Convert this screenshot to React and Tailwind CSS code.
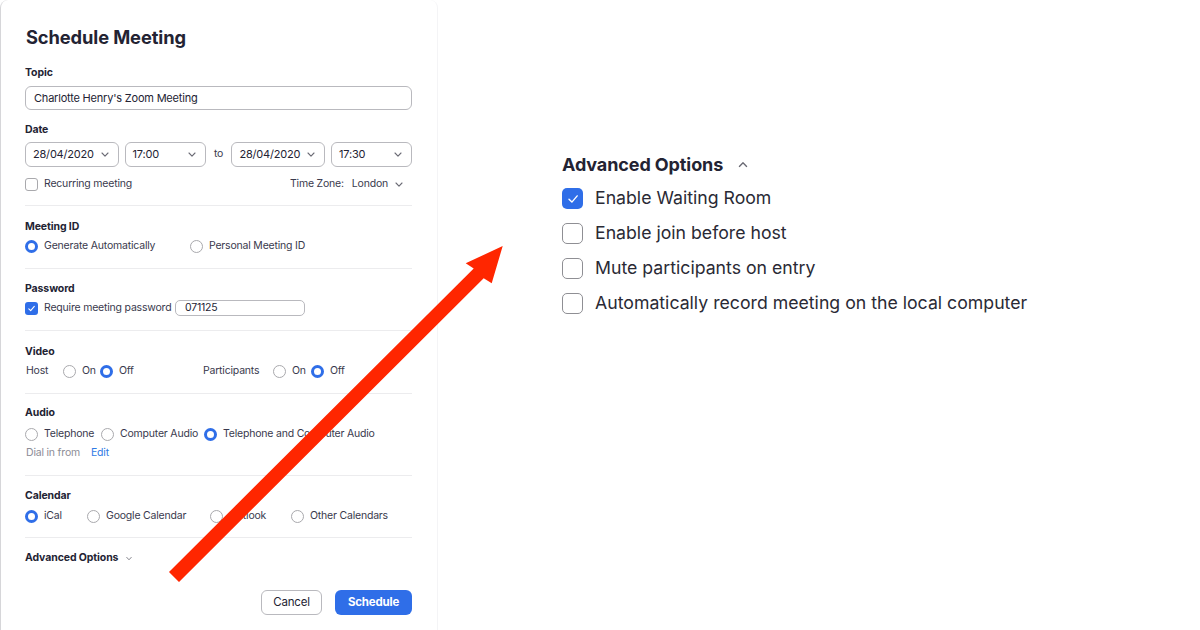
import React from "react";

const F = { fontFamily: "Inter, 'Noto Sans', sans-serif" };

function Chevron({ up = false, className = "" }) {
  return (
    <svg width="8" height="5" viewBox="0 0 8 5" className={className}>
      <path
        d={up ? "M1 4.2 L4 1 L7 4.2" : "M1 1 L4 4.2 L7 1"}
        fill="none"
        stroke="#6b6b75"
        strokeWidth="1.1"
        strokeLinecap="round"
        strokeLinejoin="round"
      />
    </svg>
  );
}

function Radio({ checked }) {
  return checked ? (
    <span className="inline-block w-[13px] h-[13px] rounded-full border-[3.5px] border-[#2f6ee8] bg-white shrink-0" />
  ) : (
    <span className="inline-block w-[13px] h-[13px] rounded-full border border-[#a9a9ad] bg-white shrink-0" />
  );
}

function SmallCheck({ checked }) {
  return checked ? (
    <span className="inline-flex items-center justify-center w-[13px] h-[13px] rounded-[3px] bg-[#2f6ee8] shrink-0">
      <svg width="9" height="9" viewBox="0 0 9 9">
        <path d="M1.8 4.8 L3.7 6.6 L7.3 2.4" fill="none" stroke="white" strokeWidth="1.1" strokeLinecap="round" strokeLinejoin="round" />
      </svg>
    </span>
  ) : (
    <span className="inline-block w-[13px] h-[13px] rounded-[3px] border border-[#a9a9ad] bg-white shrink-0" />
  );
}

function BigCheck({ checked }) {
  return checked ? (
    <span className="inline-flex items-center justify-center w-[21px] h-[21px] rounded-[5px] bg-[#2f6ee8] shrink-0">
      <svg width="14" height="14" viewBox="0 0 14 14">
        <path d="M3 7.3 L5.9 10.1 L11.2 3.9" fill="none" stroke="white" strokeWidth="1.4" strokeLinecap="round" strokeLinejoin="round" />
      </svg>
    </span>
  ) : (
    <span className="inline-block w-[21px] h-[21px] rounded-[5px] border border-[#8f8f94] bg-white shrink-0" />
  );
}

function Select({ value, w }) {
  return (
    <div
      className={`${w} h-[25px] rounded-[6px] border border-[#b9b9be] flex items-center justify-between pl-[7px] pr-[9px] text-[11px] tracking-[-0.2px] text-[#232333]`}
    >
      <span>{value}</span>
      <Chevron />
    </div>
  );
}

function Label({ children, className = "" }) {
  return <div className={`h-[14px] leading-[14px] text-[10.5px] font-bold tracking-[-0.1px] text-[#232333] ${className}`}>{children}</div>;
}

function Divider({ className = "" }) {
  return <div className={`border-t border-[#ececee] ${className}`} />;
}

export default function App() {
  return (
    <div className="relative w-[1200px] h-[630px] bg-white overflow-hidden flex whitespace-nowrap" style={F}>
      {/* Left panel */}
      <div className="w-[438px] h-[640px] shrink-0 rounded-[8px] border-x border-l-[#d6d6d9] border-r-[#f4f4f6] pl-[24px] pr-[25px] pt-[26px] flex flex-col text-[#39394d] text-[10.5px] tracking-[-0.2px]">
        <div className="h-[22px] leading-[22px] text-[18.3px] font-bold text-[#232333] tracking-[-0.1px] pl-[1px]">Schedule Meeting</div>

        <Label className="mt-[18px]">Topic</Label>
        <div className="mt-[6px] h-[24px] rounded-[6px] border border-[#b9b9be] flex items-center pl-[8px] text-[11px] text-[#232333]">
          Charlotte Henry's Zoom Meeting
        </div>

        <Label className="mt-[13px]">Date</Label>
        <div className="mt-[5px] flex items-center">
          <Select value="28/04/2020" w="w-[94px]" />
          <div className="ml-[6px]">
            <Select value="17:00" w="w-[81px]" />
          </div>
          <span className="w-[26px] text-center -mt-[2px]">to</span>
          <Select value="28/04/2020" w="w-[94px]" />
          <div className="ml-[6px]">
            <Select value="17:30" w="w-[81px]" />
          </div>
        </div>

        <div className="mt-[10px] h-[14px] flex items-center">
          <SmallCheck />
          <span className="ml-[6px]">Recurring meeting</span>
          <span className="ml-auto">Time Zone:</span>
          <span className="ml-[8px]">London</span>
          <Chevron className="ml-[7px] mr-[9px]" />
        </div>

        <Divider className="mt-[14px]" />

        <Label className="mt-[14px]">Meeting ID</Label>
        <div className="mt-[5px] h-[14px] flex items-center">
          <Radio checked />
          <span className="ml-[6px] w-[146px] shrink-0">Generate Automatically</span>
          <Radio />
          <span className="ml-[6px]">Personal Meeting ID</span>
        </div>

        <Divider className="mt-[15px]" />

        <Label className="mt-[13px]">Password</Label>
        <div className="mt-[4px] h-[16px] flex items-center">
          <SmallCheck checked />
          <span className="ml-[6px] w-[125px] shrink-0">Require meeting password</span>
          <div className="ml-[6px] w-[130px] shrink-0 h-[16px] rounded-[5px] border border-[#b9b9be] flex items-center pl-[9px] text-[#232333]">
            071125
          </div>
        </div>

        <Divider className="mt-[14px]" />

        <Label className="mt-[14px]">Video</Label>
        <div className="mt-[5px] h-[14px] flex items-center">
          <span className="w-[38px] shrink-0 pl-[1px]">Host</span>
          <Radio />
          <span className="ml-[6px] w-[18px] shrink-0">On</span>
          <Radio checked />
          <span className="ml-[6px] w-[84px] shrink-0">Off</span>
          <span className="w-[70px] shrink-0">Participants</span>
          <Radio />
          <span className="ml-[6px] w-[19px] shrink-0">On</span>
          <Radio checked />
          <span className="ml-[6px]">Off</span>
        </div>

        <Divider className="mt-[15px]" />

        <Label className="mt-[12px]">Audio</Label>
        <div className="mt-[7px] h-[14px] flex items-center">
          <Radio />
          <span className="ml-[6px] w-[57px] shrink-0">Telephone</span>
          <Radio />
          <span className="ml-[6px] w-[84px] shrink-0">Computer Audio</span>
          <Radio checked />
          <span className="ml-[6px]">Telephone and Computer Audio</span>
        </div>
        <div className="mt-[5px] h-[14px] flex items-center">
          <span className="text-[#8c8c96] ml-[1px]">Dial in from</span>
          <span className="ml-[11px] text-[#2f7ae5]">Edit</span>
        </div>

        <Divider className="mt-[15px]" />

        <Label className="mt-[13px]">Calendar</Label>
        <div className="mt-[6px] h-[14px] flex items-center">
          <Radio checked />
          <span className="ml-[6px] w-[43px] shrink-0">iCal</span>
          <Radio />
          <span className="ml-[6px] w-[104px] shrink-0">Google Calendar</span>
          <Radio />
          <span className="ml-[6px] w-[62px] shrink-0">Outlook</span>
          <Radio />
          <span className="ml-[6px]">Other Calendars</span>
        </div>

        <Divider className="mt-[14px]" />

        <div className="mt-[13px] h-[14px] flex items-center font-bold text-[#232333] tracking-[-0.1px]">
          <span>Advanced Options</span>
          <Chevron className="ml-[7px] scale-75" />
        </div>

        <div className="mt-[25px] flex justify-end gap-[13px]">
          <div className="w-[61px] h-[25px] rounded-[6px] border border-[#b9b9be] flex items-center justify-center text-[11.5px] text-[#232333]">
            Cancel
          </div>
          <div className="w-[77px] h-[25px] rounded-[6px] bg-[#2f6ee8] flex items-center justify-center text-[11.5px] font-bold text-white">
            Schedule
          </div>
        </div>
      </div>

      {/* Right panel */}
      <div className="pl-[124px] pt-[152px] flex flex-col text-[#232333]">
        <div className="h-[24px] flex items-center">
          <span className="text-[18px] font-bold tracking-[-0.1px]">Advanced Options</span>
          <Chevron up className="ml-[16px] scale-[1.2]" />
        </div>
        <div className="mt-[12px] flex flex-col gap-[14px] text-[17.7px] text-[#2a2a35]">
          {[
            ["Enable Waiting Room", true],
            ["Enable join before host", false],
            ["Mute participants on entry", false],
            ["Automatically record meeting on the local computer", false],
          ].map(([t, c]) => (
            <div key={t} className="h-[21px] flex items-center">
              <BigCheck checked={c} />
              <span className="ml-[12px]">{t}</span>
            </div>
          ))}
        </div>
      </div>

      {/* Red arrow overlay */}
      <svg className="absolute inset-0 pointer-events-none" width="1200" height="630" viewBox="0 0 1200 630">
        <polygon
          points="169,572 473.7,268.4 465.7,263.3 502.7,246 491.7,283.3 483.7,278.2 179,582"
          fill="#ff2600"
        />
      </svg>
    </div>
  );
}
